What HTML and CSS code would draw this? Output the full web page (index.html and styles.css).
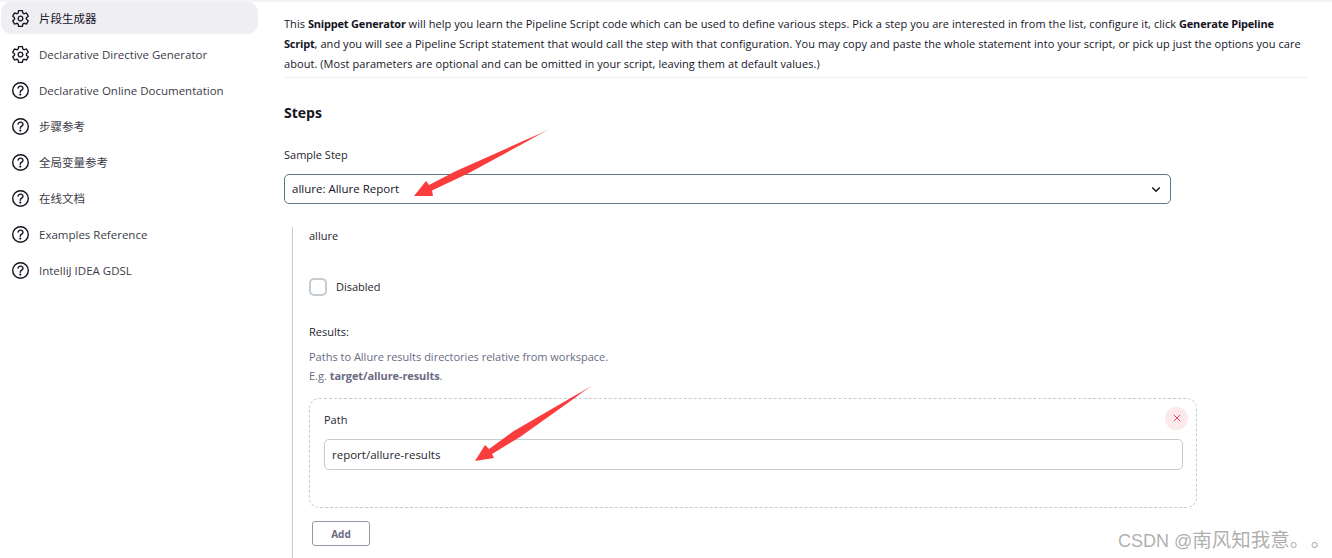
FILE: index.html
```html
<!DOCTYPE html>
<html lang="en">
<head>
<meta charset="utf-8">
<title>Snippet Generator</title>
<link rel="stylesheet" href="styles.css">
</head>
<body>
<svg class="defs" width="0" height="0">
  <defs>
    <symbol id="gear" viewBox="26 26 460 460"><path class="ic ic-gear" d="M262.290 192.310a64 64 0 1 0 57.400 57.400 64.130 64.130 0 0 0-57.400-57.400zM416.390 256a154.340 154.340 0 0 1-1.530 20.790l45.210 35.460a10.810 10.810 0 0 1 2.450 13.750l-42.770 74a10.810 10.810 0 0 1-13.140 4.590l-44.900-18.080a16.110 16.110 0 0 0-15.170 1.750A164.480 164.480 0 0 1 325 400.800a15.940 15.940 0 0 0-8.820 12.140l-6.730 47.890a11.080 11.080 0 0 1-10.680 9.170h-85.540a11.110 11.110 0 0 1-10.690-8.870l-6.720-47.820a16.070 16.070 0 0 0-9-12.220 155.300 155.300 0 0 1-21.460-12.570 16 16 0 0 0-15.110-1.710l-44.890 18.070a10.810 10.810 0 0 1-13.140-4.580l-42.770-74a10.800 10.800 0 0 1 2.450-13.750l38.210-30a16.050 16.050 0 0 0 6-14.080c-.360-4.170-.580-8.330-.580-12.500s.210-8.270.580-12.350a16 16 0 0 0-6.070-13.940l-38.190-30A10.810 10.810 0 0 1 49.480 186l42.770-74a10.810 10.810 0 0 1 13.140-4.590l44.900 18.080a16.110 16.110 0 0 0 15.170-1.750A164.480 164.480 0 0 1 187 111.200a15.940 15.940 0 0 0 8.820-12.140l6.730-47.890A11.080 11.080 0 0 1 213.230 42h85.540a11.110 11.110 0 0 1 10.690 8.870l6.720 47.820a16.070 16.070 0 0 0 9 12.220 155.300 155.300 0 0 1 21.460 12.570 16 16 0 0 0 15.110 1.710l44.890-18.070a10.810 10.810 0 0 1 13.140 4.580l42.770 74a10.800 10.800 0 0 1-2.450 13.750l-38.210 30a16.050 16.050 0 0 0-6.050 14.080c.330 4.140.550 8.300.550 12.470z"/></symbol>
    <symbol id="help" viewBox="64 64 384 384"><path class="ic" d="M256 80a176 176 0 1 0 176 176A176 176 0 0 0 256 80z"/><path class="ic" d="M200 202.290s.840-17.500 19.570-32.570C230.680 160.770 244 158.180 256 158c10.930-.140 20.690 1.670 26.530 4.450 10 4.760 29.470 16.380 29.470 41.090 0 26-17 37.810-36.370 50.800S251 281.430 251 296"/><circle class="dot" cx="250" cy="348" r="24"/></symbol>
    <linearGradient id="fade-one" gradientUnits="userSpaceOnUse" x1="145" y1="4" x2="122" y2="15"><stop offset="0" stop-color="#fb3c3c" stop-opacity=".4"/><stop offset="1" stop-color="#fb3c3c"/></linearGradient>
    <linearGradient id="fade-two" gradientUnits="userSpaceOnUse" x1="128" y1="5" x2="110" y2="17"><stop offset="0" stop-color="#fb3c3c" stop-opacity=".4"/><stop offset="1" stop-color="#fb3c3c"/></linearGradient>
  </defs>
</svg>
<div class="page">
  <nav class="sidebar">
    <a class="nav-item active"><svg class="nav-icon"><use href="#gear"/></svg><span>片段生成器</span></a>
    <a class="nav-item"><svg class="nav-icon"><use href="#gear"/></svg><span>Declarative Directive Generator</span></a>
    <a class="nav-item"><svg class="nav-icon"><use href="#help"/></svg><span>Declarative Online Documentation</span></a>
    <a class="nav-item"><svg class="nav-icon"><use href="#help"/></svg><span>步骤参考</span></a>
    <a class="nav-item"><svg class="nav-icon"><use href="#help"/></svg><span>全局变量参考</span></a>
    <a class="nav-item"><svg class="nav-icon"><use href="#help"/></svg><span>在线文档</span></a>
    <a class="nav-item"><svg class="nav-icon"><use href="#help"/></svg><span>Examples Reference</span></a>
    <a class="nav-item"><svg class="nav-icon"><use href="#help"/></svg><span>IntelliJ IDEA GDSL</span></a>
  </nav>
  <main class="main">
    <p class="intro">This <b>Snippet Generator</b> will help you learn the Pipeline Script code which can be used to define various steps. Pick a step you are interested in from the list, configure it, click <b>Generate Pipeline</b><br><b>Script</b>, and you will see a Pipeline Script statement that would call the step with that configuration. You may copy and paste the whole statement into your script, or pick up just the options you care<br>about. (Most parameters are optional and can be omitted in your script, leaving them at default values.)</p>
    <h2 class="heading">Steps</h2>
    <div class="label sample-label">Sample Step</div>
    <div class="select"><span>allure: Allure Report</span><svg class="chevron" viewBox="0 0 12 8"><path d="M1.500 1.500 6 6l4.500-4.500"/></svg></div>
    <section class="config">
      <div class="label step-name">allure</div>
      <div class="check-row"><span class="checkbox"></span><span class="label">Disabled</span></div>
      <div class="label results-label">Results:</div>
      <div class="help">Paths to Allure results directories relative from workspace.<br>E.g. <b>target/allure-results</b>.</div>
      <div class="repeat">
        <div class="repeat-head"><span class="label">Path</span><span class="close"><svg viewBox="0 0 10 10"><path d="M1 1l8 8M9 1l-8 8"/></svg></span></div>
        <div class="input">report/allure-results</div>
      </div>
      <button class="add">Add</button>
    </section>
  </main>
</div>
<svg class="arrow arrow-one" width="155" height="80" viewBox="0 0 155 80"><path fill="url(#fade-one)" d="M9 71 21 56l3 4 26-13.500L145 4 63 48.500 27 65.500 28 71z"/></svg>
<svg class="arrow arrow-two" width="135" height="90" viewBox="0 0 135 90"><path fill="url(#fade-two)" d="M10 81 20 65l4 4 24-17.500L128 5 55 57 27 74l2 4z"/></svg>
<div class="watermark">CSDN @<span class="watermark-cjk">南风知我意。 。</span></div>
</body>
</html>
```
FILE: styles.css
```css
* { box-sizing: border-box; }
html, body { margin: 0; height: 100%; overflow: hidden; background: #fff; }
body {
  font-family: "Open Sans", "Noto Sans", "Noto Sans CJK SC", sans-serif;
  font-size: 11px;
  line-height: 18px;
  color: #14141f;
  border-top: 2px solid #f3f4f8;
}
.defs { position: absolute; }
.page { display: flex; }
.sidebar { width: 258px; flex: none; display: flex; flex-direction: column; gap: 4px; padding-left: 1px; font-size: 11.5px; }
.nav-item {
  height: 32px;
  display: flex;
  align-items: center;
  gap: 10px;
  padding-left: 11px;
  border-radius: 10px;
  color: #3c3c48;
}
.nav-item span { padding-top: 1px; }
.nav-item.active { background: #eeeef3; color: #14141f; }
.nav-icon { width: 17px; height: 17px; flex: none; }
.ic { fill: none; stroke: #14141f; stroke-width: 32; stroke-linecap: round; stroke-linejoin: round; }
.ic-gear { stroke-width: 36; }
.dot { fill: #14141f; }
.main { flex: none; width: 1024px; margin-left: 26px; padding-top: 12px; }
.intro { margin: 0; padding-bottom: 3px; border-bottom: 1px solid #f0f1f4; height: 64px; color: #14141f; line-height: 20px; letter-spacing: .06px; }
.intro b { font-weight: 700; letter-spacing: -.2px; }
.help b { font-weight: 700; letter-spacing: -.1px; }
.heading { margin: 25px 0 0; font-size: 14px; line-height: 20px; font-weight: 700; color: #14141f; }
.label { color: #26262f; }
.sample-label { margin-top: 23px; }
.select {
  margin-top: 10px;
  width: 887px;
  height: 30px;
  display: flex;
  align-items: center;
  justify-content: space-between;
  padding: 0 9px 0 7px;
  border: 1px solid #5c7889;
  border-radius: 5px;
  font-size: 11.5px;
}
.chevron { width: 10px; height: 7px; }
.chevron path { fill: none; stroke: #14141f; stroke-width: 1.8; }
.config { margin: 23px 0 0 8px; padding-left: 16px; border-left: 1px solid #c3ccd1; height: 332px; }
.check-row { margin-top: 33px; display: flex; align-items: center; gap: 9px; height: 18px; }
.checkbox { width: 18px; height: 18px; border: 2px solid #c3ccd1; border-radius: 5px; }
.results-label { margin-top: 27px; }
.help { margin-top: 6px; color: #6a6a84; line-height: 19px; }
.repeat {
  margin-top: 13px;
  width: 888px;
  height: 110px;
  padding: 12px 8px 0 14px;
  border: 1px dashed #c3ccd1;
  border-radius: 10px;
}
.repeat-head { display: flex; justify-content: space-between; align-items: center; height: 18px; }
.close {
  width: 23px;
  height: 23px;
  margin-top: -4px;
  border-radius: 50%;
  background: #fbe9ec;
  display: flex;
  align-items: center;
  justify-content: center;
}
.close svg { width: 8px; height: 8px; }
.close path { stroke: #e6193c; stroke-width: 1; fill: none; }
.input {
  margin-top: 10px;
  width: 859px;
  height: 31px;
  padding: 6px 7px;
  border: 1px solid #c3ccd1;
  border-radius: 5px;
  color: #26262f;
  font-size: 11.5px;
}
.add {
  display: block;
  margin: 13px 0 0 3px;
  width: 58px;
  height: 25px;
  padding: 0;
  background: #fff;
  border: 1px solid #8f99a8;
  border-radius: 3px;
  font: 700 10px/18px "Open Sans", "Noto Sans", sans-serif;
  color: #6a6a84;
}
.arrow { position: absolute; }
.arrow-one { left: 405px; top: 125px; }
.arrow-two { left: 465px; top: 380px; }
.watermark {
  position: absolute;
  left: 1118px;
  top: 527px;
  font-family: "Liberation Sans", "Noto Sans CJK SC", sans-serif;
  font-size: 18px;
  line-height: 26px;
  color: rgba(120, 120, 120, .6);
  white-space: nowrap;
}
.watermark-cjk { font-size: 19.5px; word-spacing: -4px; }
```
